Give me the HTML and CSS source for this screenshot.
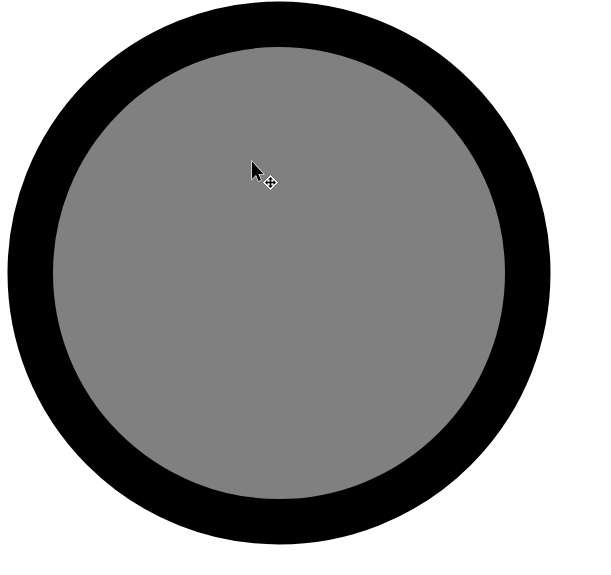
FILE: index.html
```html
<!DOCTYPE html>
<html lang="en">

<head>
    <meta charset="UTF-8">
    <title>Circle</title>
    <link rel="stylesheet" href="styles.css">
</head>

<body>
    <div class="canvas">
        <svg class="ring" width="611" height="575" viewBox="0 0 611 575">
            <circle class="ring-shape" cx="279" cy="273" r="248.75"/>
        </svg>
        <svg class="cursor" width="32" height="34" viewBox="0 0 32 34">
            <!-- arrow -->
            <path class="cursor-arrow" d="M4 3.5V21L8 17L10.5 23L13 22L10.5 16H15.5Z"/>
            <!-- move badge -->
            <path class="cursor-badge" d="M22.5 16.5L30.5 24.5L22.5 32.5L14.5 24.5Z"/>
            <path d="M22.5 20.5V28.5M18.5 24.5H26.5" stroke="#000" stroke-width="1.6" fill="none"/>
            <path d="M22.5 19L25 21.5H20ZM22.5 30L20 27.5H25ZM17 24.5L19.5 22V27ZM28 24.5L25.5 27V22Z" fill="#000"/>
        </svg>
    </div>
</body>

</html>
```
FILE: styles.css
```css
body {
    margin: 0;
    padding: 0;
    background-color: #fff;
}

.canvas {
    position: relative;
    width: 611px;
    height: 575px;
    overflow: hidden;
}

.ring {
    display: block;
}

.ring-shape {
    fill: #808080;
    stroke: #000;
    stroke-width: 45.5px;
}

.cursor {
    position: absolute;
    left: 248px;
    top: 158px;
}

.cursor-arrow {
    fill: #000;
    stroke: #fff;
    stroke-width: 1.2px;
    paint-order: stroke;
}

.cursor-badge {
    fill: #fff;
    stroke: #333;
    stroke-width: 0.6px;
}
```
